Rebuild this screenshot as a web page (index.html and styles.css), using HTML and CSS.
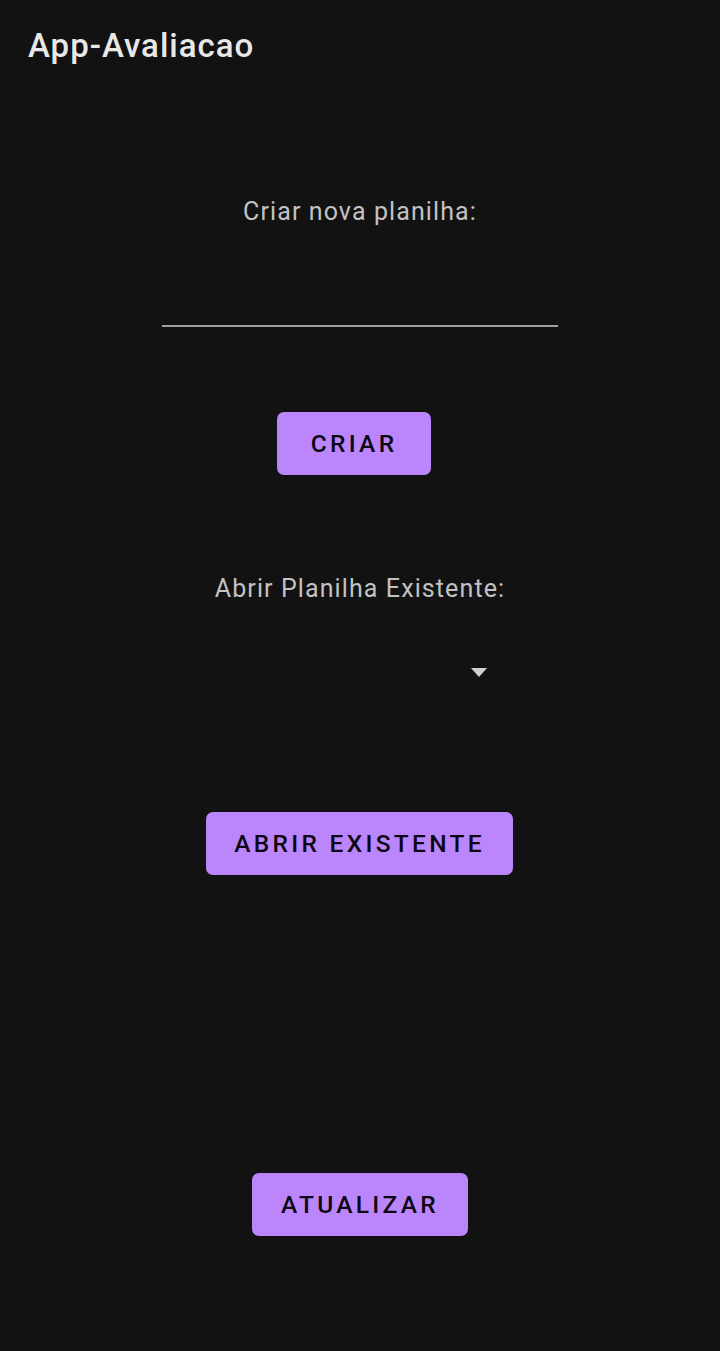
FILE: index.html
```html
<!DOCTYPE html>
<html lang="pt">
<head>
<meta charset="utf-8">
<title>App-Avaliacao</title>
<link rel="stylesheet" href="styles.css">
</head>
<body>
<header class="toolbar">
  <h1 class="toolbar-title">App-Avaliacao</h1>
</header>
<main class="content">
  <p class="label label-create">Criar nova planilha:</p>
  <div class="text-input"></div>
  <button class="btn btn-create">CRIAR</button>
  <p class="label label-open">Abrir Planilha Existente:</p>
  <div class="spinner">
    <svg class="spinner-arrow" width="16" height="9" viewBox="0 0 16 9"><path d="M0 0 L16 0 L8 9 Z" fill="#d0d0d0"/></svg>
  </div>
  <button class="btn btn-open">ABRIR EXISTENTE</button>
  <button class="btn btn-refresh">ATUALIZAR</button>
</main>
</body>
</html>
```

FILE: styles.css
```css
html, body {
  margin: 0;
  padding: 0;
  background: #121212;
  height: 100%;
}
body {
  font-family: Roboto, "Noto Sans", sans-serif;
  width: 720px;
  height: 1351px;
  overflow: hidden;
}
.toolbar {
  height: 92px;
  padding-left: 28px;
  display: flex;
  align-items: flex-start;
}
.toolbar-title {
  margin: 0;
  padding-top: 26px;
  font-size: 33px;
  line-height: 40px;
  font-weight: 500;
  letter-spacing: 1px;
  color: #e8e8e8;
}
.content {
  display: flex;
  flex-direction: column;
  align-items: center;
}
.label {
  margin: 0;
  font-size: 25px;
  line-height: 32px;
  letter-spacing: 1.1px;
  color: #c2c2c2;
}
.label-create {
  margin-top: 104px;
}
.text-input {
  width: 396px;
  height: 2px;
  background: #9e9e9e;
  margin-top: 97px;
}
.btn {
  border: none;
  border-radius: 7px;
  background: #bb86fc;
  color: #0d0714;
  font-family: Roboto, "Noto Sans", sans-serif;
  font-size: 24.5px;
  font-weight: 500;
  letter-spacing: 3.3px;
  height: 63px;
  padding: 0 20px;
  cursor: pointer;
}
.btn-create {
  margin-top: 85px;
  margin-right: 12px;
  width: 154px;
}
.label-open {
  margin-top: 98px;
}
.spinner {
  width: 396px;
  height: 40px;
  margin-top: 47px;
  display: flex;
  justify-content: flex-end;
  align-items: center;
  padding-right: 71px;
  box-sizing: border-box;
}
.spinner-arrow {
  display: block;
}
.btn-open {
  margin-top: 120px;
  margin-right: 1px;
  width: 307px;
}
.btn-refresh {
  margin-top: 298px;
  width: 216px;
}
```
